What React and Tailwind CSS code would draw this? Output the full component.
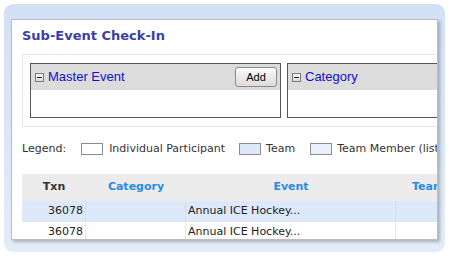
import React from 'react';

const verdana = { fontFamily: '"DejaVu Sans", Verdana, sans-serif' };
const arial = { fontFamily: '"Liberation Sans", Arial, sans-serif' };

function MinusBox() {
  return (
    <span className="flex h-[9px] w-[9px] items-center justify-center border border-[#7a7a7a] bg-gradient-to-b from-white to-[#d8d8d8]">
      <span className="h-[1px] w-[5px] bg-[#222]" />
    </span>
  );
}

function PanelBox({ title, action }) {
  return (
    <div className="flex h-[55px] w-[251px] shrink-0 flex-col border border-[#555] bg-white">
      <div className="flex h-[26px] items-center bg-[#dcdcdc] pl-[4px] pr-[3px]">
        <MinusBox />
        <span className="ml-[4px] text-[13px] text-[#1212cc]" style={arial}>{title}</span>
        {action && (
          <button className="ml-auto flex h-[20px] w-[42px] items-center justify-center rounded-[3px] border border-[#8a8a8a] bg-gradient-to-b from-[#fbfbfb] to-[#dcdcdc] text-[11px] text-black" style={arial}>
            {action}
          </button>
        )}
      </div>
    </div>
  );
}

function LegendSwatch({ color, className }) {
  return <span className={`block h-[12px] w-[22px] shrink-0 border border-[#8c8c8c] ${color} ${className}`} />;
}

const rows = [
  { txn: '36078', event: 'Annual ICE Hockey...', bg: 'bg-[#dde9fb]', line: 'border-[#d2def0]' },
  { txn: '36078', event: 'Annual ICE Hockey...', bg: 'bg-white', line: 'border-[#e6e6e6]' },
];

export default function App() {
  return (
    <div className="h-[256px] w-[450px] overflow-hidden bg-white p-[4px]" style={verdana}>
      <div className="h-[248px] w-[441px] rounded-[9px] bg-gradient-to-b from-[#d2e1f6] to-[#e3ecf9] pl-[7px] pt-[15px]">
        <div className="h-[221px] w-[427px] overflow-hidden border border-[#bdbdbd] bg-white shadow-[2px_2px_3px_rgba(0,0,0,0.25)]">
          <div className="w-[700px] pl-[10px] pt-[8px]">
            <div className="h-[16px] text-[13px] font-bold leading-[16px] text-[#3b3eaa]">Sub-Event Check-In</div>

            <div className="mt-[10px] flex h-[73px] gap-[6px] border border-[#e6e6e6] px-[7px] pt-[8px]">
              <PanelBox title="Master Event" action="Add" />
              <PanelBox title="Category" />
            </div>

            <div className="mt-[16px] flex h-[12px] items-center whitespace-nowrap text-[11px] text-[#333]">
              <span>Legend:</span>
              <LegendSwatch color="bg-white" className="ml-[15px]" />
              <span className="ml-[6px]">Individual Participant</span>
              <LegendSwatch color="bg-[#dde8f8]" className="ml-[14px]" />
              <span className="ml-[5px]">Team</span>
              <LegendSwatch color="bg-[#eaf1fc]" className="ml-[15px]" />
              <span className="ml-[5px]">Team Member (list)</span>
            </div>

            <div className="mt-[19px] w-[520px] text-[11px]">
              <div className="flex h-[27px] items-center bg-[#ececec] font-bold">
                <div className="w-[64px] text-center text-[#333]">Txn</div>
                <div className="w-[100px] text-center text-[#2a8be6]">Category</div>
                <div className="w-[210px] text-center text-[#2a8be6]">Event</div>
                <div className="w-[60px] pl-[16px] text-[#2a8be6]">Team</div>
              </div>
              {rows.map((r, i) => (
                <div key={i} className={`flex h-[21px] items-center text-[#222] ${r.bg}`}>
                  <div className={`flex h-full w-[64px] items-center justify-end border-r pr-[2px] ${r.line}`}>{r.txn}</div>
                  <div className={`h-full w-[100px] border-r ${r.line}`} />
                  <div className={`flex h-full w-[210px] items-center border-r pl-[2px] ${r.line}`}>{r.event}</div>
                  <div className="h-full w-[60px]" />
                </div>
              ))}
            </div>
          </div>
        </div>
      </div>
    </div>
  );
}
